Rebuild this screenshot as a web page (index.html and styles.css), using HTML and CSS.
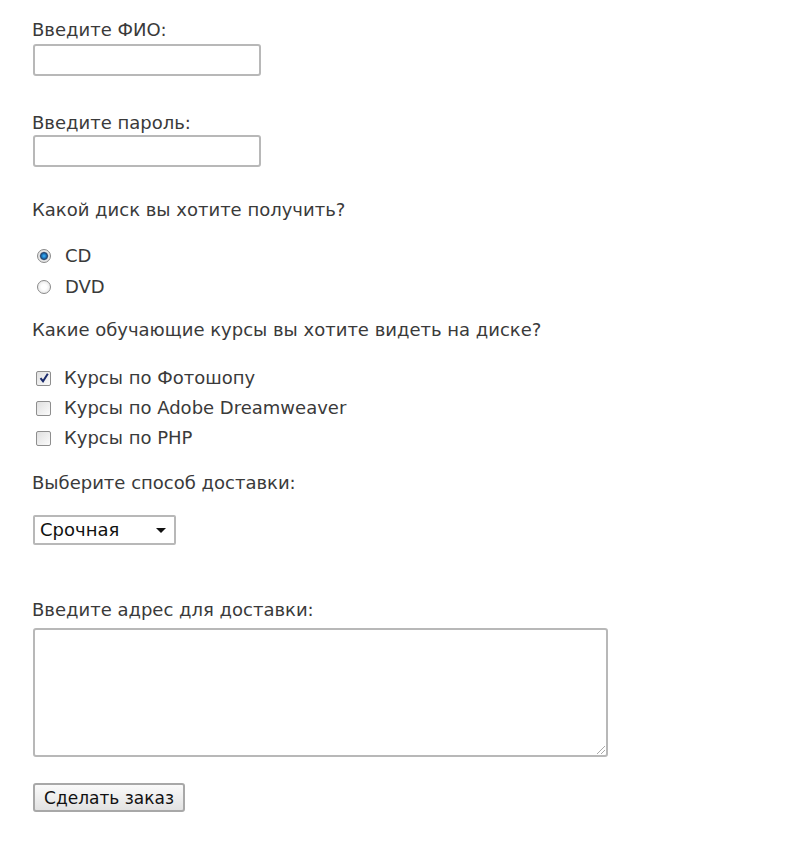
FILE: index.html
```html
<!DOCTYPE html>
<html lang="ru">
<head>
<meta charset="utf-8">
<link rel="stylesheet" href="styles.css">
</head>
<body>
<form class="form">
  <div class="field f-name">
    <label class="lbl">Введите ФИО:</label>
    <input class="txt" type="text">
  </div>
  <div class="field f-pass">
    <label class="lbl">Введите пароль:</label>
    <input class="txt" type="password">
  </div>
  <div class="group g-disk">
    <p class="q">Какой диск вы хотите получить?</p>
    <div class="opts opts-radio">
      <label class="opt"><span class="radio on"></span>CD</label>
      <label class="opt"><span class="radio"></span>DVD</label>
    </div>
  </div>
  <div class="group g-courses">
    <p class="q">Какие обучающие курсы вы хотите видеть на диске?</p>
    <div class="opts opts-check">
      <label class="opt"><span class="check on"><svg viewBox="0 0 12 12" width="12" height="12"><path d="M2.5 6.2 L5 9.2 L9.8 1.8" fill="none" stroke="#1a2a6a" stroke-width="2"/></svg></span>Курсы по Фотошопу</label>
      <label class="opt"><span class="check"></span>Курсы по Adobe Dreamweaver</label>
      <label class="opt"><span class="check"></span>Курсы по PHP</label>
    </div>
  </div>
  <div class="group g-delivery">
    <p class="q">Выберите способ доставки:</p>
    <div class="select"><span>Срочная</span><span class="arrow"></span></div>
  </div>
  <div class="field f-addr">
    <label class="lbl">Введите адрес для доставки:</label>
    <div class="area"><span class="grip"></span></div>
  </div>
  <button class="btn" type="button">Сделать заказ</button>
</form>
</body>
</html>
```
FILE: styles.css
```css
html, body { margin: 0; padding: 0; background: #fff; }
body {
  font-family: "DejaVu Sans", Verdana, sans-serif;
  font-size: 18px;
  line-height: 22px;
  color: #3a3a3a;
}
.form {
  padding: 19px 0 0 32px;
  display: flex;
  flex-direction: column;
  align-items: flex-start;
}
.field { display: flex; flex-direction: column; align-items: flex-start; }
.lbl { line-height: 22px; margin-bottom: 3px; }
.txt {
  width: 228px; height: 32px; box-sizing: border-box;
  border: 2px solid #b8b8b8; border-radius: 3px;
  margin: 0 0 0 1px; padding: 0; background: #fff;
}
.f-pass { margin-top: 36px; }
.f-pass .lbl { margin-bottom: 1px; }
.g-disk { margin-top: 32px; }
.g-courses { margin-top: 17px; }
.g-delivery { margin-top: 19px; }
.q { margin: 0; line-height: 22px; }
.opts { display: flex; flex-direction: column; }
.opts-radio { margin-top: 19px; }
.opts-radio .opt { height: 31px; }
.opts-check { margin-top: 22px; }
.opt { display: flex; align-items: center; height: 30px; }
.radio {
  width: 14px; height: 14px; border-radius: 50%;
  border: 1px solid #8a8a8a; box-sizing: border-box;
  background: radial-gradient(circle, #fff 30%, #ddd 100%);
  margin: 0 14px 0 5px;
}
.radio.on {
  background: radial-gradient(circle, #3db7ff 0, #1a6fb5 28%, #1d3d66 40%, #e8e8e8 55%, #d8d8d8 100%);
}
.check {
  width: 15px; height: 15px; box-sizing: border-box;
  border: 1px solid #8e8e8e; border-radius: 2px;
  background: linear-gradient(135deg, #e0e0e0, #fbfbfb);
  margin: 0 13px 0 4px;
  display: flex; align-items: center; justify-content: center;
}
.select {
  margin-top: 21px;
  width: 143px; height: 30px; box-sizing: border-box;
  border: 2px solid #b8b8b8; border-radius: 2px;
  margin-left: 1px;
  display: flex; align-items: center; justify-content: space-between;
  padding: 0 8px 0 5px;
  color: #111;
}
.arrow {
  width: 0; height: 0;
  border-left: 5px solid transparent; border-right: 5px solid transparent;
  border-top: 5px solid #111;
}
.f-addr { margin-top: 54px; }
.f-addr .lbl { margin-bottom: 7px; }
.area {
  position: relative;
  width: 575px; height: 129px; box-sizing: border-box;
  border: 2px solid #b8b8b8; border-radius: 3px; margin-left: 1px;
}
.grip {
  position: absolute; right: 1px; bottom: 1px; width: 10px; height: 10px;
  background: repeating-linear-gradient(135deg, transparent 0 2px, #aaa 2px 3px);
  clip-path: polygon(100% 0, 100% 100%, 0 100%);
}
.btn {
  margin: 26px 0 0 1px;
  width: 152px; height: 29px;
  font-family: "DejaVu Sans", Verdana, sans-serif; font-size: 17px;
  color: #111;
  border: 2px solid #a8a8a8; border-radius: 3px;
  background: linear-gradient(#fafafa, #e2e2e2);
  padding: 0;
}
```
